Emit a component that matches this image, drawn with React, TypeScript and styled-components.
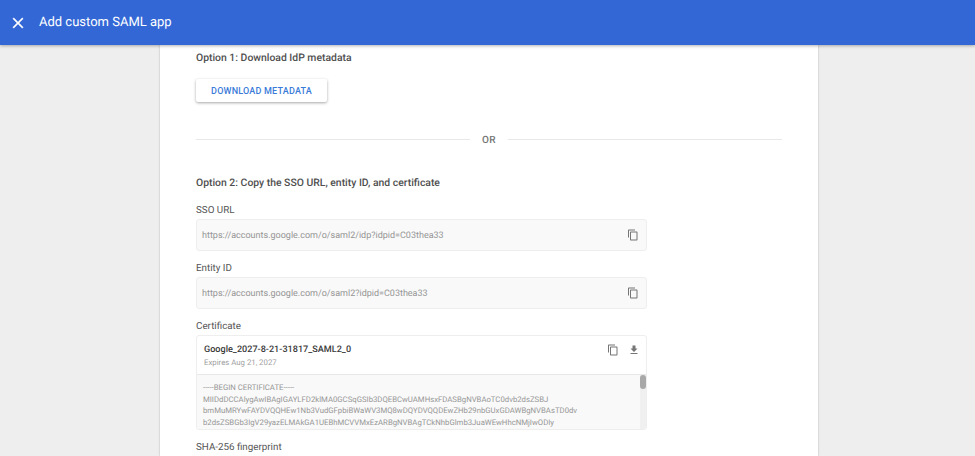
import styled, { createGlobalStyle } from 'styled-components';

const GlobalStyle = createGlobalStyle`
  html, body {
    margin: 0;
    height: 100%;
    overflow: hidden;
    background: #eeeeee;
    font-family: Roboto, "Liberation Sans", sans-serif;
    text-rendering: geometricPrecision;
  }
`;

const CopyIcon = () => (
  <svg width="12" height="12" viewBox="0 0 24 24" fill="#757575">
    <path d="M16 1H4c-1.1 0-2 .9-2 2v14h2V3h12V1zm3 4H8c-1.1 0-2 .9-2 2v14c0 1.1.9 2 2 2h11c1.1 0 2-.9 2-2V7c0-1.1-.9-2-2-2zm0 16H8V7h11v14z" />
  </svg>
);

const DownloadIcon = () => (
  <svg width="12" height="12" viewBox="0 0 24 24" fill="#757575">
    <path d="M19 9h-4V3H9v6H5l7 7 7-7zM5 18v2h14v-2H5z" />
  </svg>
);

const CloseIcon = () => (
  <svg width="18" height="18" viewBox="0 0 24 24" fill="#ffffff" stroke="#ffffff" strokeWidth="0.4">
    <path d="M19 6.41 17.59 5 12 10.59 6.41 5 5 6.41 10.59 12 5 17.59 6.41 19 12 13.41 17.59 19 19 17.59 13.41 12z" />
  </svg>
);

const Field = ({ label, value }: { label: string; value: string }) => (
  <>
    <FieldLabel>{label}</FieldLabel>
    <InputBox>
      <InputValue>{value}</InputValue>
      <CopyIcon />
    </InputBox>
  </>
);

export default function App() {
  return (
    <Page>
      <GlobalStyle />
      <Header>
        <CloseIcon />
        <Title>Add custom SAML app</Title>
      </Header>
      <Card>
        <Heading>Option 1: Download IdP metadata</Heading>
        <DownloadButton>DOWNLOAD METADATA</DownloadButton>
        <Divider>
          <DividerText>OR</DividerText>
        </Divider>
        <Heading $second>Option 2: Copy the SSO URL, entity ID, and certificate</Heading>
        <Field label="SSO URL" value="https://accounts.google.com/o/saml2/idp?idpid=C03thea33" />
        <Field label="Entity ID" value="https://accounts.google.com/o/saml2?idpid=C03thea33" />
        <FieldLabel>Certificate</FieldLabel>
        <CertBox>
          <CertHead>
            <div>
              <CertName>Google_2027-8-21-31817_SAML2_0</CertName>
              <CertExpiry>Expires Aug 21, 2027</CertExpiry>
            </div>
            <CertActions>
              <CopyIcon />
              <DownloadIcon />
            </CertActions>
          </CertHead>
          <CertBody>
            <CertText>
              <div>-----BEGIN CERTIFICATE-----</div>
              <div>MIIDdDCCAlygAwIBAgIGAYLFD2klMA0GCSqGSIb3DQEBCwUAMHsxFDASBgNVBAoTC0dvb2dsZSBJ</div>
              <div>bmMuMRYwFAYDVQQHEw1Nb3VudGFpbiBWaWV3MQ8wDQYDVQQDEwZHb29nbGUxGDAWBgNVBAsTD0dv</div>
              <div>b2dsZSBGb3IgV29yazELMAkGA1UEBhMCVVMxEzARBgNVBAgTCkNhbGlmb3JuaWEwHhcNMjIwODIy</div>
            </CertText>
            <Scrollbar>
              <Thumb />
            </Scrollbar>
          </CertBody>
        </CertBox>
        <FieldLabel>SHA-256 fingerprint</FieldLabel>
      </Card>
    </Page>
  );
}

const Page = styled.div`
  height: 456px;
  display: flex;
  flex-direction: column;
  overflow: hidden;
`;

const Header = styled.header`
  position: relative;
  z-index: 1;
  flex: none;
  height: 45px;
  display: flex;
  align-items: center;
  gap: 12px;
  padding-left: 9px;
  background: #3367d6;
  box-shadow: 0 1px 3px rgba(0, 0, 0, 0.3);
`;

const Title = styled.h1`
  margin: 0;
  font-size: 13px;
  font-weight: 400;
  color: #ffffff;
`;

const Card = styled.main`
  flex: 1;
  box-sizing: border-box;
  width: 658px;
  margin-left: 160px;
  padding: 0 36px;
  background: #ffffff;
  box-shadow: 0 0 2px rgba(0, 0, 0, 0.25);
`;

const Heading = styled.h2<{ $second?: boolean }>`
  margin: ${(p) => (p.$second ? '30px 0 16px' : '6px 0 0')};
  font-size: 10.4px;
  line-height: 13px;
  font-weight: 500;
  color: #4f4f4f;
`;

const DownloadButton = styled.button`
  display: block;
  width: 131px;
  height: 23px;
  margin-top: 15px;
  padding: 0;
  border: 0;
  border-radius: 2px;
  background: #ffffff;
  box-shadow: 0 1px 3px rgba(0, 0, 0, 0.35);
  color: #3a7bd9;
  font: 500 9px Roboto, sans-serif;
  letter-spacing: 0.2px;
`;

const Divider = styled.div`
  display: flex;
  align-items: center;
  gap: 12px;
  margin-top: 30px;
  height: 14px;
  color: #757575;
  font-size: 10px;
  font-weight: 500;
  letter-spacing: 0.3px;

  &::before,
  &::after {
    content: '';
    flex: 1;
    height: 1px;
    background: #e8e8e8;
  }
`;

const DividerText = styled.span`
  padding-top: 2px;
`;

const FieldLabel = styled.div`
  margin-top: 12px;
  font-size: 9.8px;
  line-height: 12px;
  color: #555555;
`;

const InputBox = styled.div`
  box-sizing: border-box;
  width: 451px;
  height: 32px;
  margin-top: 2px;
  padding: 0 7px 0 5px;
  display: flex;
  align-items: center;
  justify-content: space-between;
  background: #f9f9f9;
  border: 1px solid #eeeeee;
  border-radius: 3px;
  font-size: 9px;
  color: #959595;
`;

const InputValue = styled.span`
  padding-top: 2px;
`;

const CertBox = styled.div`
  box-sizing: border-box;
  width: 451px;
  height: 95px;
  margin-top: 2px;
  border: 1px solid #eeeeee;
  border-radius: 3px;
  overflow: hidden;
`;

const CertHead = styled.div`
  box-sizing: border-box;
  height: 39px;
  padding: 8px 6px 0 7px;
  display: flex;
  justify-content: space-between;
  border-bottom: 1px solid #e8e8e8;
`;

const CertName = styled.div`
  font-size: 9.1px;
  line-height: 13px;
  font-weight: 500;
  color: #3a3a3a;
`;

const CertExpiry = styled.div`
  margin-top: 1px;
  font-size: 7.8px;
  line-height: 10px;
  color: #a0a0a0;
`;

const CertActions = styled.div`
  display: flex;
  gap: 9px;
  height: 12px;
  align-items: center;
`;

const CertBody = styled.div`
  display: flex;
  height: 54px;
  background: #f9f9f9;
`;

const CertText = styled.div`
  flex: 1;
  padding: 7px 0 0 6px;
  font-size: 7.75px;
  line-height: 11.6px;
  color: #969696;
  white-space: nowrap;
  overflow: hidden;
`;

const Scrollbar = styled.div`
  flex: none;
  width: 6px;
  background: #f0f0f0;
`;

const Thumb = styled.div`
  width: 6px;
  height: 14px;
  border-radius: 3px;
  background: #a8a8a8;
`;
